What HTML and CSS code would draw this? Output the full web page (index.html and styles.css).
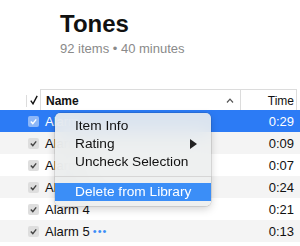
FILE: index.html
```html
<!DOCTYPE html>
<html lang="en">
<head>
    <meta charset="UTF-8">
    <title>Tones</title>
    <link rel="stylesheet" href="styles.css">
</head>
<body>
    <div class="page">
        <div class="summary">
            <h1>Tones</h1>
            <div class="meta">92 items • 40 minutes</div>
        </div>

        <div class="list">
            <div class="row head">
                <div class="cell check-col">
                    <svg width="8" height="10" viewBox="0 0 8 10"><path d="M0.8 5.6 L3 8.8 L7.2 0.8" fill="none" stroke="#111" stroke-width="1.4"/></svg>
                </div>
                <div class="cell name-col">
                    <span>Name</span>
                    <svg class="caret" width="8" height="5" viewBox="0 0 8 5"><path d="M1 4.5 L4 1.2 L7 4.5" fill="none" stroke="#555" stroke-width="1.2"/></svg>
                </div>
                <div class="cell time-col">Time</div>
            </div>

            <div class="row selected">
                <div class="cell check-col"><span class="box"><svg width="9" height="9" viewBox="0 0 9 9"><path d="M1.8 4.6 L3.8 6.6 L7.2 2.4" fill="none" stroke="#fff" stroke-width="1.4"/></svg></span></div>
                <div class="cell name-col">Alarm</div>
                <div class="cell time-col">0:29</div>
            </div>
            <div class="row">
                <div class="cell check-col"><span class="box"><svg width="9" height="9" viewBox="0 0 9 9"><path d="M1.8 4.6 L3.8 6.6 L7.2 2.4" fill="none" stroke="#444" stroke-width="1.4"/></svg></span></div>
                <div class="cell name-col">Alarm 1</div>
                <div class="cell time-col">0:09</div>
            </div>
            <div class="row">
                <div class="cell check-col"><span class="box"><svg width="9" height="9" viewBox="0 0 9 9"><path d="M1.8 4.6 L3.8 6.6 L7.2 2.4" fill="none" stroke="#444" stroke-width="1.4"/></svg></span></div>
                <div class="cell name-col">Alarm 2</div>
                <div class="cell time-col">0:07</div>
            </div>
            <div class="row">
                <div class="cell check-col"><span class="box"><svg width="9" height="9" viewBox="0 0 9 9"><path d="M1.8 4.6 L3.8 6.6 L7.2 2.4" fill="none" stroke="#444" stroke-width="1.4"/></svg></span></div>
                <div class="cell name-col">Alarm 3</div>
                <div class="cell time-col">0:24</div>
            </div>
            <div class="row">
                <div class="cell check-col"><span class="box"><svg width="9" height="9" viewBox="0 0 9 9"><path d="M1.8 4.6 L3.8 6.6 L7.2 2.4" fill="none" stroke="#444" stroke-width="1.4"/></svg></span></div>
                <div class="cell name-col">Alarm 4</div>
                <div class="cell time-col">0:21</div>
            </div>
            <div class="row">
                <div class="cell check-col"><span class="box"><svg width="9" height="9" viewBox="0 0 9 9"><path d="M1.8 4.6 L3.8 6.6 L7.2 2.4" fill="none" stroke="#444" stroke-width="1.4"/></svg></span></div>
                <div class="cell name-col">Alarm 5 <span class="more">•••</span></div>
                <div class="cell time-col">0:13</div>
            </div>
        </div>

        <div class="menu">
            <div class="menu-item">Item Info</div>
            <div class="menu-item">Rating <span class="arrow"></span></div>
            <div class="menu-item">Uncheck Selection</div>
            <div class="separator"></div>
            <div class="menu-item active">Delete from Library</div>
        </div>
    </div>
</body>
</html>
```

FILE: styles.css
```css
:root {
    --select: #2c7bf5;
    --highlight: #3b8ef7;
    --stripe: #f4f4f4;
    --line: #dcdcdc;
}

body {
    margin: 0;
    font-family: "Liberation Sans", Arial, sans-serif;
    color: #111;
    background: #fff;
}

.page {
    position: relative;
    width: 300px;
    height: 246px;
    overflow: hidden;
}

.summary {
    padding: 11px 0 0 60px;
    height: 78px;
    box-sizing: border-box;
}

h1 {
    margin: 0;
    font-size: 24px;
    line-height: 26px;
    font-weight: bold;
}

.meta {
    margin-top: 4px;
    font-size: 13px;
    color: #8a8a8a;
}

.list {
    margin-top: 11px;
}

.row {
    display: grid;
    grid-template-columns: 40px 200px 57px 3px;
    height: 22px;
    align-items: center;
    font-size: 13px;
}

.row:nth-child(odd) {
    background: var(--stripe);
}

.row.head {
    height: 21px;
    background: #fff;
    font-size: 12px;
}

.row.selected {
    background: var(--select);
    color: #fff;
}

.cell {
    display: flex;
    align-items: center;
    height: 100%;
    box-sizing: border-box;
}

.check-col {
    padding-left: 28px;
}

.name-col {
    padding-left: 5px;
}

.time-col {
    justify-content: flex-end;
    padding-right: 3px;
}

.head .check-col {
    padding-left: 30px;
    position: relative;
}

.head .check-col::before {
    content: "";
    position: absolute;
    left: 26px;
    top: 6px;
    height: 12px;
    border-left: 1px solid var(--line);
}

.head .name-col,
.head .time-col {
    border-top: 1px solid var(--line);
    border-left: 1px solid var(--line);
    padding-top: 1px;
}

.head .name-col {
    font-weight: bold;
    justify-content: space-between;
    padding-right: 6px;
}

.head .time-col {
    border-right: 1px solid var(--line);
    padding-right: 2px;
}

.box {
    width: 11px;
    height: 11px;
    border-radius: 2px;
    background: #dedede;
    display: flex;
    align-items: center;
    justify-content: center;
}

.selected .box {
    background: #8db7f8;
}

.more {
    color: var(--highlight);
    margin-left: 3px;
    font-size: 11px;
    letter-spacing: 1px;
}

.menu {
    position: absolute;
    left: 55px;
    top: 113px;
    width: 156px;
    padding: 4px 0 5px;
    border-radius: 5px;
    background: rgba(236, 238, 238, 0.9);
    backdrop-filter: blur(10px);
    box-shadow: 0 0 0 0.5px rgba(0, 0, 0, 0.18), 0 3px 8px rgba(0, 0, 0, 0.18);
    font-size: 13.7px;
    color: #111;
}

.menu-item {
    height: 18px;
    line-height: 18px;
    padding-left: 20px;
    position: relative;
}

.menu-item.active {
    background: var(--highlight);
    color: #fff;
}

.arrow {
    position: absolute;
    right: 14px;
    top: 4px;
    width: 0;
    height: 0;
    border-top: 5px solid transparent;
    border-bottom: 5px solid transparent;
    border-left: 7px solid #222;
}

.separator {
    height: 1px;
    margin: 5px 0 6px;
    background: #d6d6d6;
}
```
